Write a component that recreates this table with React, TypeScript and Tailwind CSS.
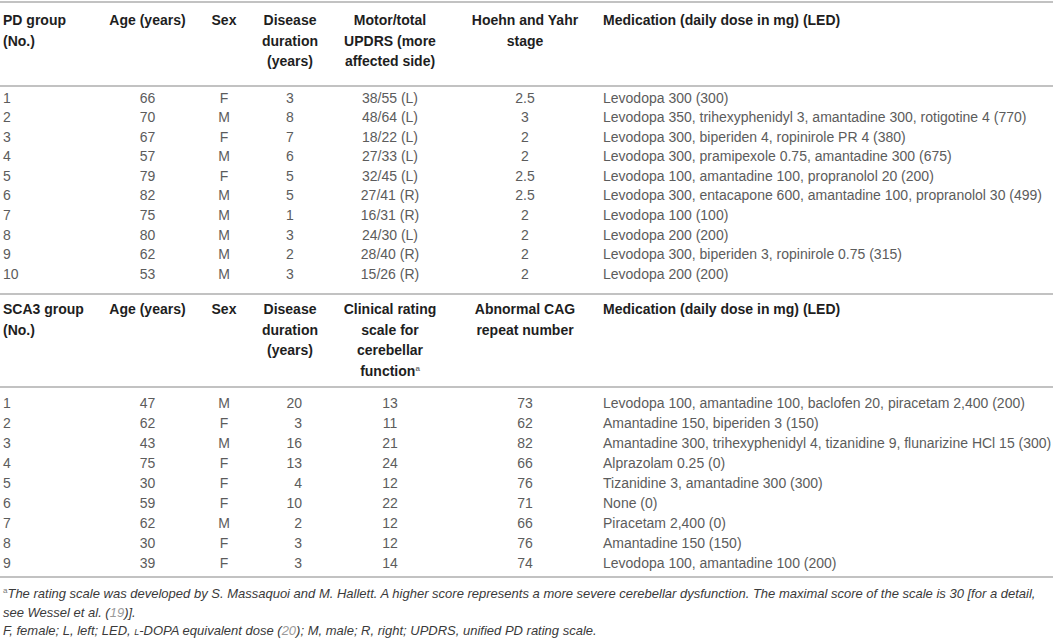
import type { ReactNode } from 'react';

type Row = [string, string, string, string, string, string, string];

const pdRows: Row[] = [
  ['1', '66', 'F', '3', '38/55 (L)', '2.5', 'Levodopa 300 (300)'],
  ['2', '70', 'M', '8', '48/64 (L)', '3', 'Levodopa 350, trihexyphenidyl 3, amantadine 300, rotigotine 4 (770)'],
  ['3', '67', 'F', '7', '18/22 (L)', '2', 'Levodopa 300, biperiden 4, ropinirole PR 4 (380)'],
  ['4', '57', 'M', '6', '27/33 (L)', '2', 'Levodopa 300, pramipexole 0.75, amantadine 300 (675)'],
  ['5', '79', 'F', '5', '32/45 (L)', '2.5', 'Levodopa 100, amantadine 100, propranolol 20 (200)'],
  ['6', '82', 'M', '5', '27/41 (R)', '2.5', 'Levodopa 300, entacapone 600, amantadine 100, propranolol 30 (499)'],
  ['7', '75', 'M', '1', '16/31 (R)', '2', 'Levodopa 100 (100)'],
  ['8', '80', 'M', '3', '24/30 (L)', '2', 'Levodopa 200 (200)'],
  ['9', '62', 'M', '2', '28/40 (R)', '2', 'Levodopa 300, biperiden 3, ropinirole 0.75 (315)'],
  ['10', '53', 'M', '3', '15/26 (R)', '2', 'Levodopa 200 (200)'],
];

const scaRows: Row[] = [
  ['1', '47', 'M', '20', '13', '73', 'Levodopa 100, amantadine 100, baclofen 20, piracetam 2,400 (200)'],
  ['2', '62', 'F', '3', '11', '62', 'Amantadine 150, biperiden 3 (150)'],
  ['3', '43', 'M', '16', '21', '82', 'Amantadine 300, trihexyphenidyl 4, tizanidine 9, flunarizine HCl 15 (300)'],
  ['4', '75', 'F', '13', '24', '66', 'Alprazolam 0.25 (0)'],
  ['5', '30', 'F', '4', '12', '76', 'Tizanidine 3, amantadine 300 (300)'],
  ['6', '59', 'F', '10', '22', '71', 'None (0)'],
  ['7', '62', 'M', '2', '12', '66', 'Piracetam 2,400 (0)'],
  ['8', '30', 'F', '3', '12', '76', 'Amantadine 150 (150)'],
  ['9', '39', 'F', '3', '14', '74', 'Levodopa 100, amantadine 100 (200)'],
];

function Cols() {
  return (
    <colgroup>
      <col className="w-[105px]" />
      <col className="w-[85px]" />
      <col className="w-[68px]" />
      <col className="w-[64px]" />
      <col className="w-[136px]" />
      <col className="w-[134px]" />
      <col />
    </colgroup>
  );
}

// one block of the table: its own header row, then the patient rows
function Group({
  headers,
  rows,
  padDuration,
  headPad,
  rowLeading,
  bodyTop,
  bodyBottom,
}: {
  headers: ReactNode[];
  rows: Row[];
  padDuration?: boolean;
  headPad: string;
  rowLeading: string;
  bodyTop: string;
  bodyBottom: string;
}) {
  return (
    <table className="w-full table-fixed border-collapse">
      <Cols />
      <thead>
        <tr className="border-b-2 border-[#c2c2c2]">
          {headers.map((h, i) => (
            <th
              key={i}
              className={`align-top font-bold text-[14px] leading-[20.5px] text-[#1e1e1e] ${headPad} ${
                i === 0 ? 'text-left pl-[3px]' : i === 6 ? 'text-left pl-[11px]' : 'text-center'
              }`}
            >
              {h}
            </th>
          ))}
        </tr>
      </thead>
      <tbody className={`text-[14px] text-[#5c5c5c] ${rowLeading}`}>
        {rows.map((r, ri) => {
          const pad = `${ri === 0 ? bodyTop : ''} ${ri === rows.length - 1 ? bodyBottom : ''}`;
          return (
            <tr key={ri}>
              <td className={`pl-[3px] text-left ${pad}`}>{r[0]}</td>
              <td className={`text-center ${pad}`}>{r[1]}</td>
              <td className={`text-center ${pad}`}>{r[2]}</td>
              <td className={`text-center ${pad}`}>
                {padDuration ? <span className="inline-block w-[20px] text-right ml-[4px]">{r[3]}</span> : r[3]}
              </td>
              <td className={`text-center ${pad}`}>{r[4]}</td>
              <td className={`text-center ${pad}`}>{r[5]}</td>
              <td className={`pl-[11px] text-left whitespace-nowrap ${pad}`}>{r[6]}</td>
            </tr>
          );
        })}
      </tbody>
    </table>
  );
}

export default function App() {
  const pdHeaders: ReactNode[] = [
    <>PD group<br />(No.)</>,
    'Age (years)',
    'Sex',
    <>Disease<br />duration<br />(years)</>,
    <>Motor/total<br />UPDRS (more<br />affected side)</>,
    <>Hoehn and Yahr<br />stage</>,
    'Medication (daily dose in mg) (LED)',
  ];
  const scaHeaders: ReactNode[] = [
    <>SCA3 group<br />(No.)</>,
    'Age (years)',
    'Sex',
    <>Disease<br />duration<br />(years)</>,
    <>
      Clinical rating<br />scale for<br />cerebellar<br />function
      <span className="relative -top-[5px] text-[8px] leading-none font-bold text-[#777]">a</span>
    </>,
    <>Abnormal CAG<br />repeat number</>,
    'Medication (daily dose in mg) (LED)',
  ];

  return (
    <div className="w-[1055px] h-[638px] bg-white overflow-hidden font-['Liberation_Sans',Arial,sans-serif]">
      <div className="w-[1053px] pt-[1px]">
        <div className="border-t-2 border-[#c2c2c2]" />
        <Group
          headers={pdHeaders}
          rows={pdRows}
          headPad="pt-[7px] pb-[13px]"
          rowLeading="leading-[19.6px]"
          bodyTop="pt-[2px]"
          bodyBottom="pb-[9px]"
        />
        <div className="border-t-2 border-[#c2c2c2]" />
        <Group
          headers={scaHeaders}
          rows={scaRows}
          padDuration
          headPad="pt-[4px] pb-[5px]"
          rowLeading="leading-[20px]"
          bodyTop="pt-[5px]"
          bodyBottom="pb-[3px]"
        />
        <div className="border-t-2 border-[#c2c2c2]" />
        <div className="pt-[7px] pl-[3px] text-[13px] leading-[18.5px] italic text-[#3a3a3a]">
          <p>
            <span className="relative -top-[5px] text-[8px] leading-none not-italic text-[#777]">a</span>
            The rating scale was developed by S. Massaquoi and M. Hallett. A higher score represents a more severe
            cerebellar dysfunction. The maximal score of the scale is 30 [for a detail, see Wessel et al. (
            <span className="text-[#9a9a9a]">19</span>)].
          </p>
          <p>
            F, female; L, left; LED, <span className="[font-variant:small-caps]">l</span>-DOPA equivalent dose (
            <span className="text-[#9a9a9a]">20</span>); M, male; R, right; UPDRS, unified PD rating scale.
          </p>
        </div>
      </div>
    </div>
  );
}
